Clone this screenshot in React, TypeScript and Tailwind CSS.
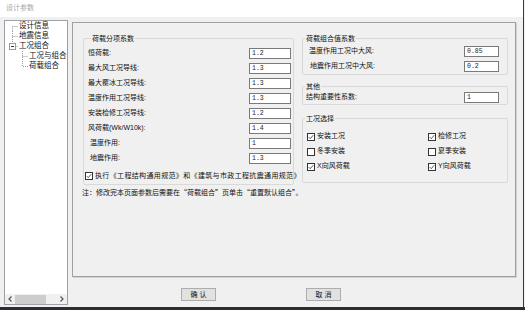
import type { ReactNode } from 'react';

const loadFactors = [
  { label: '恒荷载:', value: '1.2', indent: false },
  { label: '最大风工况导线:', value: '1.3', indent: false },
  { label: '最大覆冰工况导线:', value: '1.3', indent: false },
  { label: '温度作用工况导线:', value: '1.3', indent: false },
  { label: '安装检修工况导线:', value: '1.2', indent: false },
  { label: '风荷载(Wk/W10k):', value: '1.4', indent: false },
  { label: '温度作用:', value: '1', indent: true },
  { label: '地震作用:', value: '1.3', indent: true },
];

const caseOptions = [
  { label: '安装工况', checked: true },
  { label: '检修工况', checked: true },
  { label: '冬季安装', checked: false },
  { label: '夏季安装', checked: false },
  { label: 'X向风荷载', checked: true },
  { label: 'Y向风荷载', checked: true },
];

function Field({ value, wide }: { value: string; wide?: boolean }) {
  return (
    <div
      className={`h-[11px] shrink-0 border border-[#7a7a7a] bg-white pl-[2px] font-['Liberation_Mono',monospace] text-[6.5px] leading-[9px] text-[#222] ${
        wide ? 'w-[42px]' : 'w-[35px]'
      }`}
    >
      {value}
    </div>
  );
}

function CheckBox({ checked }: { checked: boolean }) {
  return (
    <span className="flex h-[8px] w-[8px] shrink-0 items-center justify-center border border-[#333] bg-white">
      {checked && (
        <svg viewBox="0 0 8 8" className="h-[6px] w-[6px]">
          <path d="M1 4.2 L3 6.2 L7 1.6" fill="none" stroke="#222" strokeWidth="1" />
        </svg>
      )}
    </span>
  );
}

function GroupBox({ title, className, children }: { title: string; className: string; children: ReactNode }) {
  return (
    <div className={`rounded-[2px] border border-[#d9d9d9] ${className}`}>
      <div className="-mt-[5px] w-fit bg-[#f0f0f0] px-[1px] leading-[9px]">{title}</div>
      {children}
    </div>
  );
}

function Tree() {
  return (
    <div className="flex h-[285px] w-[64px] flex-col border border-[#a0a0a8] bg-white text-[7.5px] text-[#111]">
      <div className="flex flex-col">
        <div className="flex h-[10px] items-center">
          <svg width="14" height="10" className="shrink-0">
            <path d="M7.5 5.5 V10 M7.5 5.5 H13" stroke="#9a9a9a" strokeDasharray="1 1" />
          </svg>
          <span className="leading-[10px]">设计信息</span>
        </div>
        <div className="flex h-[10px] items-center">
          <svg width="14" height="10" className="shrink-0">
            <path d="M7.5 0 V10 M7.5 5.5 H13" stroke="#9a9a9a" strokeDasharray="1 1" />
          </svg>
          <span className="leading-[10px]">地震信息</span>
        </div>
        <div className="flex h-[10px] items-center">
          <svg width="14" height="10" className="shrink-0">
            <path d="M7.5 0 V2.5 M10.5 5.5 H13" stroke="#9a9a9a" strokeDasharray="1 1" />
            <rect x="4.5" y="2.5" width="6" height="6" fill="white" stroke="#9a9a9a" />
            <path d="M6 5.5 H9" stroke="#333" />
          </svg>
          <span className="leading-[10px]">工况组合</span>
        </div>
        <div className="flex h-[10px] items-center">
          <svg width="24" height="10" className="shrink-0">
            <path d="M17.5 0 V10 M17.5 5.5 H23" stroke="#9a9a9a" strokeDasharray="1 1" />
          </svg>
          <span className="leading-[10px]">工况与组合</span>
        </div>
        <div className="flex h-[10px] items-center">
          <svg width="24" height="10" className="shrink-0">
            <path d="M17.5 0 V5.5 H23" fill="none" stroke="#9a9a9a" strokeDasharray="1 1" />
          </svg>
          <span className="leading-[10px]">荷载组合</span>
        </div>
      </div>
      <div className="flex-1" />
      <div className="flex h-[10px] items-center bg-[#f0f0f0]">
        <div className="flex w-[10px] justify-center">
          <svg width="4" height="6" viewBox="0 0 4 6">
            <path d="M3.5 0.5 L1 3 L3.5 5.5" fill="none" stroke="#555" strokeWidth="1.2" />
          </svg>
        </div>
        <div className="h-[9px] w-[31px] bg-[#cdcdcd]" />
        <div className="flex-1" />
        <div className="flex w-[10px] justify-center">
          <svg width="4" height="6" viewBox="0 0 4 6">
            <path d="M0.5 0.5 L3 3 L0.5 5.5" fill="none" stroke="#555" strokeWidth="1.2" />
          </svg>
        </div>
      </div>
    </div>
  );
}

export default function App() {
  return (
    <div className="h-[310px] w-[525px] overflow-hidden bg-[#f0f0f0] font-['Liberation_Sans','Noto_Sans_CJK_SC',sans-serif] text-[7px] text-[#111]">
      <div className="flex h-[307px] w-[524px] flex-col border-r border-[#3a3a3a] bg-[#f0f0f0]">
        {/* Title bar */}
        <div className="flex h-[17px] shrink-0 items-center bg-white pl-[6px] text-[7px] text-[#a8a8a8]">设计参数</div>

        <div className="flex flex-1 pl-[4px] pt-[3px]">
          <Tree />

          <div className="ml-[4px] flex flex-col">
            {/* Main panel */}
            <div className="mt-[2px] h-[255px] w-[444px] border border-[#a0a0a0] pl-[10px] pt-[15px] shadow-[1px_1px_0_#d2d2d2]">
              <div className="flex gap-[8px]">
                {/* Left column */}
                <div className="w-[211px]">
                  <GroupBox title="荷载分项系数" className="pb-[1px] pl-[4px] pr-[2px] [&>div:first-child]:ml-[3px]">
                    <div className="mt-[3px] flex flex-col">
                      {loadFactors.map((f) => (
                        <div key={f.label} className="flex h-[15px] items-center justify-between">
                          <span className={f.indent ? 'pl-[2px]' : ''}>{f.label}</span>
                          <Field value={f.value} wide />
                        </div>
                      ))}
                    </div>
                    <div className="-ml-[3px] mt-[3px] flex h-[14px] items-center gap-[2px] whitespace-nowrap">
                      <CheckBox checked />
                      <span className="tracking-[0.35px]">执行《工程结构通用规范》和《建筑与市政工程抗震通用规范》</span>
                    </div>
                  </GroupBox>
                  <div className="-ml-[1px] mt-[1px] h-[12px] whitespace-nowrap leading-[12px]">
                    注：修改完本页面参数后需要在<span className="font-['Noto_Sans_CJK_SC',sans-serif]">“</span>荷载组合
                    <span className="font-['Noto_Sans_CJK_SC',sans-serif]">”</span>页单击
                    <span className="font-['Noto_Sans_CJK_SC',sans-serif]">“</span>重置默认组合
                    <span className="font-['Noto_Sans_CJK_SC',sans-serif]">”</span>。
                  </div>
                </div>

                {/* Right column */}
                <div className="flex w-[206px] flex-col">
                  <GroupBox title="荷载组合值系数" className="pl-[6px] pr-[8px] [&>div:first-child]:-ml-[4px]">
                    <div className="mt-[1px] flex flex-col">
                      <div className="flex h-[15px] items-center justify-between">
                        <span>温度作用工况中大风:</span>
                        <Field value="0.85" />
                      </div>
                      <div className="flex h-[15px] items-center justify-between">
                        <span className="pl-[1px]">地震作用工况中大风:</span>
                        <Field value="0.2" />
                      </div>
                    </div>
                  </GroupBox>

                  <GroupBox title="其他" className="mt-[11px] pb-[1px] pl-[3px] pr-[8px] [&>div:first-child]:-ml-[1px]">
                    <div className="flex h-[12px] items-center justify-between">
                      <span>结构重要性系数:</span>
                      <Field value="1" />
                    </div>
                  </GroupBox>

                  <GroupBox title="工况选择" className="mt-[13px] pb-[8px] pl-[4px] pr-[8px] [&>div:first-child]:-ml-[2px]">
                    <div className="mt-[6px] grid grid-cols-[121px_1fr]">
                      {caseOptions.map((o) => (
                        <div key={o.label} className="flex h-[15px] items-center gap-[2px]">
                          <CheckBox checked={o.checked} />
                          <span>{o.label}</span>
                        </div>
                      ))}
                    </div>
                  </GroupBox>
                </div>
              </div>
            </div>

            {/* Buttons */}
            <div className="mt-[11px] flex gap-[90px] pl-[109px]">
              <button className="flex h-[13px] w-[35px] items-center justify-center border border-[#adadad] bg-[#e1e1e1] text-[7px] leading-none text-[#111]">
                确 认
              </button>
              <button className="flex h-[13px] w-[35px] items-center justify-center border border-[#adadad] bg-[#e1e1e1] text-[7px] leading-none text-[#111]">
                取 消
              </button>
            </div>
          </div>
        </div>
      </div>
      <div className="h-[3px] w-[525px] bg-[#2a2e33]" />
    </div>
  );
}
